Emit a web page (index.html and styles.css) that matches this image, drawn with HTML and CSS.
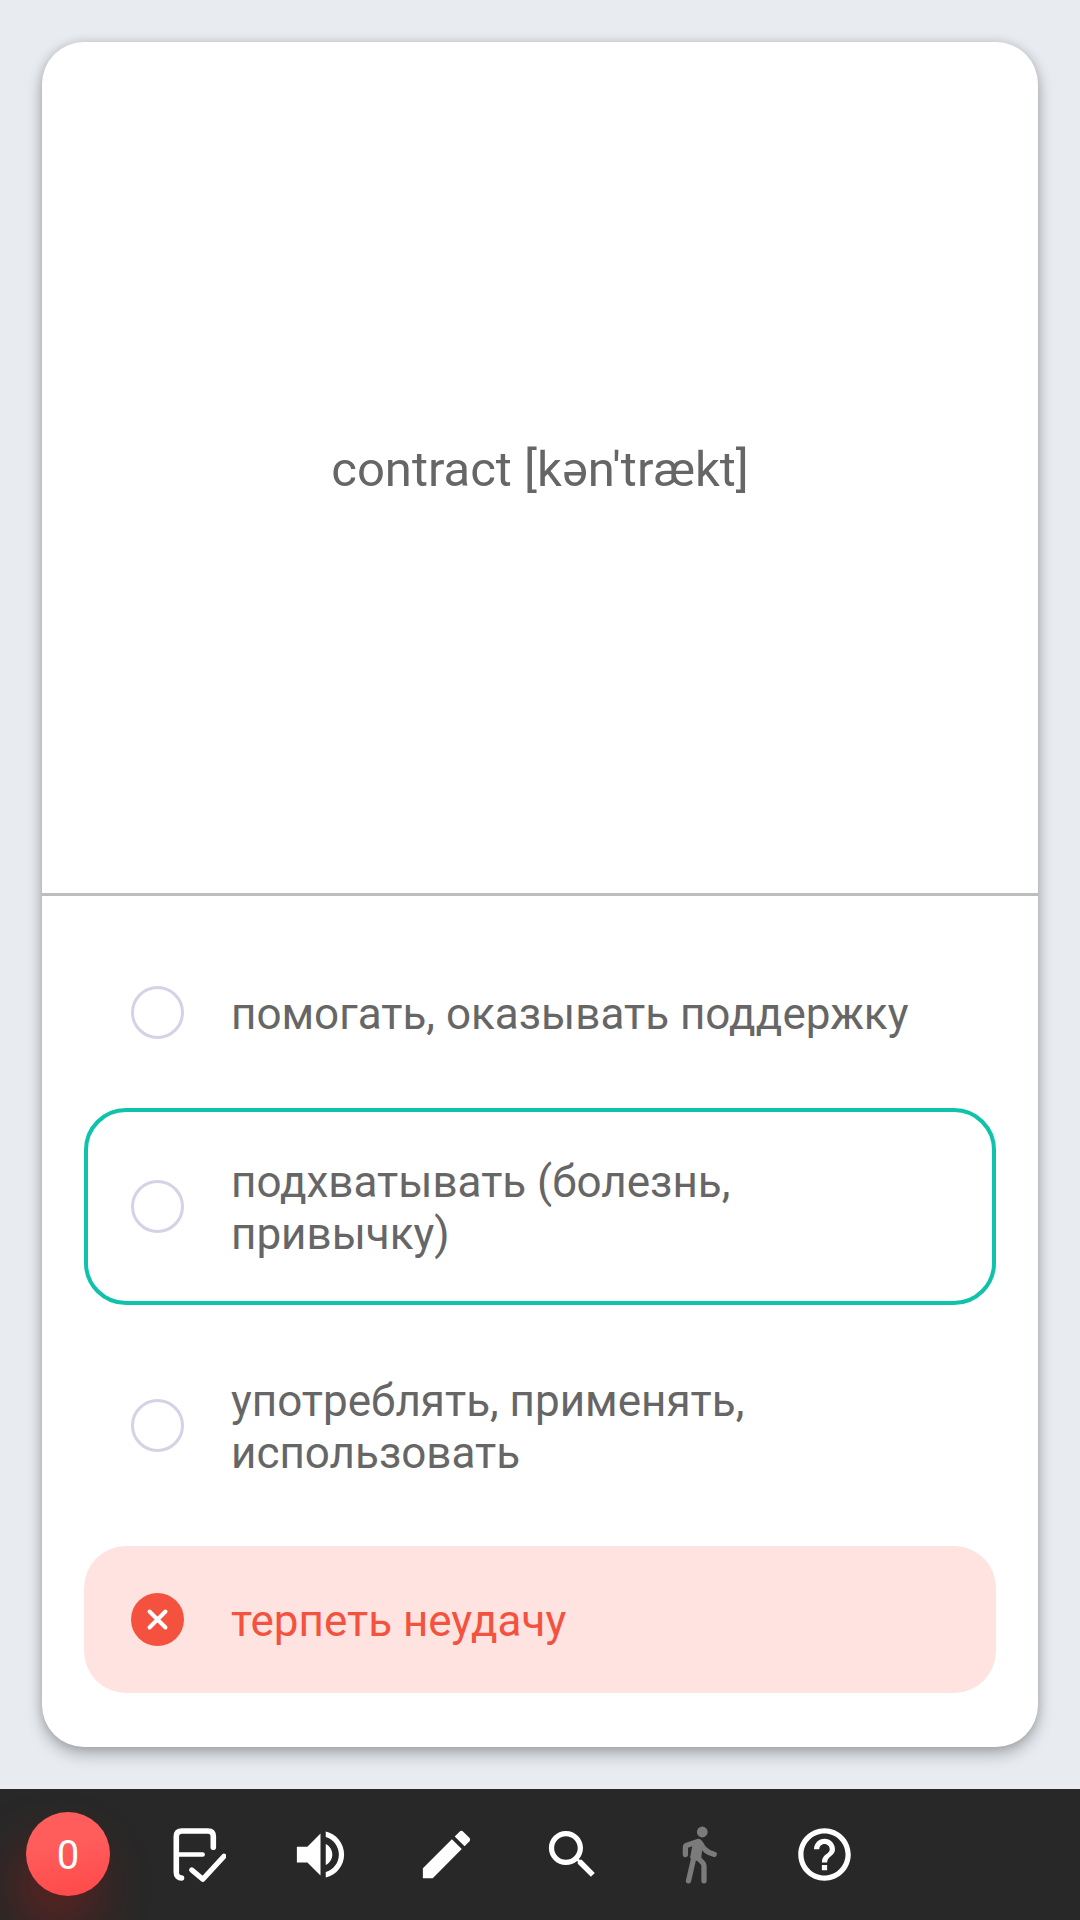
FILE: index.html
```html
<!DOCTYPE html>
<html lang="ru">
<head>
  <meta charset="utf-8">
  <meta name="viewport" content="width=device-width, initial-scale=1">
  <title>contract</title>
  <link rel="stylesheet" href="styles.css">
</head>
<body>
  <main class="stage">
    <article class="card">
      <h1 class="word">contract [kən'trækt]</h1>
      <form class="answers">
        <label class="answer">
          <input class="answer-mark" type="radio" name="answer">
          <span class="answer-text">помогать, оказывать поддержку</span>
        </label>
        <label class="answer answer-correct">
          <input class="answer-mark" type="radio" name="answer">
          <span class="answer-text">подхватывать (болезнь, привычку)</span>
        </label>
        <label class="answer">
          <input class="answer-mark" type="radio" name="answer">
          <span class="answer-text">употреблять, применять, использовать</span>
        </label>
        <label class="answer answer-wrong">
          <span class="mark-box">
            <input class="answer-mark" type="radio" name="answer" checked>
            <svg class="cross" viewBox="0 0 53 53" aria-hidden="true"><path d="M18.500 18.500L34.500 34.500M34.500 18.500L18.500 34.500"/></svg>
          </span>
          <span class="answer-text">терпеть неудачу</span>
        </label>
      </form>
    </article>
  </main>

  <nav class="toolbar">
    <button class="counter" type="button">0</button>
    <button class="tool" type="button" aria-label="Отметить">
      <svg class="icon icon-line" viewBox="0 0 63 63"><path stroke-width="5.600" d="M18.500 55C15.500 55 13.300 53 13.300 49.500V13.500Q13.300 8 19 8H45Q50.300 8 50.300 13.500V24.300"/><path stroke-width="4.600" d="M13.500 31.500H39.600"/><path stroke-width="5.200" d="M28.800 47L39.800 56.300L61 33.200"/></svg>
    </button>
    <button class="tool" type="button" aria-label="Произнести">
      <svg class="icon" viewBox="0 0 24 24"><path d="M3 9v6h4l5 5V4L7 9H3zm13.500 3c0-1.770-1.020-3.290-2.500-4.030v8.050c1.480-.730 2.500-2.250 2.500-4.020zM14 3.230v2.060c2.890.860 5 3.540 5 6.710s-2.110 5.850-5 6.710v2.060c4.010-.910 7-4.490 7-8.770s-2.990-7.860-7-8.770z"/></svg>
    </button>
    <button class="tool" type="button" aria-label="Изменить">
      <svg class="icon" viewBox="0 0 24 24"><path d="M3 17.250V21h3.750L17.810 9.940l-3.750-3.750L3 17.250zM20.710 7.040c.390-.390.390-1.020 0-1.410l-2.340-2.340c-.390-.390-1.020-.390-1.410 0l-1.830 1.830 3.750 3.750 1.830-1.830z"/></svg>
    </button>
    <button class="tool" type="button" aria-label="Поиск">
      <svg class="icon" viewBox="0 0 24 24"><path d="M15.500 14h-.790l-.280-.270C15.410 12.590 16 11.110 16 9.500 16 5.910 13.090 3 9.500 3S3 5.910 3 9.500 5.910 16 9.500 16c1.610 0 3.090-.590 4.230-1.570l.270.280v.790l5 4.990L20.490 19l-4.990-5zm-6 0C7.010 14 5 11.990 5 9.500S7.010 5 9.500 5 14 7.010 14 9.500 11.990 14 9.500 14z"/></svg>
    </button>
    <button class="tool tool-off" type="button" aria-label="Прогулка" disabled>
      <svg class="icon icon-line" viewBox="0 0 63 63"><circle cx="35.300" cy="9" r="5.400" fill="currentColor" stroke="none"/><path stroke-width="5.300" d="M18.400 31.500V24.500Q18.400 23 20 22.300L31 18.400Q32.500 18.400 33.500 20.500Q38 29.500 47.300 31.300M27 34L21.500 57.800M31 35L35.500 39.500Q37 41 37 43V57.800"/><path fill="currentColor" stroke="none" d="M26 19L33 16.500L37 21L35 28L34 37L28 38L23 35Z"/></svg>
    </button>
    <button class="tool" type="button" aria-label="Справка">
      <svg class="icon" viewBox="0 0 24 24"><path d="M11 18h2v-2h-2v2zm1-16C6.480 2 2 6.480 2 12s4.480 10 10 10 10-4.480 10-10S17.520 2 12 2zm0 18c-4.410 0-8-3.590-8-8s3.590-8 8-8 8 3.590 8 8-3.590 8-8 8zm0-14c-2.210 0-4 1.790-4 4h2c0-1.100.900-2 2-2s2 .900 2 2c0 2-3 1.750-3 5h2c0-2.250 3-2.500 3-5 0-2.210-1.790-4-4-4z"/></svg>
    </button>
  </nav>
</body>
</html>
```
FILE: styles.css
```css
* {
  box-sizing: border-box;
}

body {
  display: flex;
  flex-direction: column;
  min-height: 100vh;
  margin: 0;
  background: #e8ebf0;
  color: #666;
  font-family: Roboto, "Noto Sans", sans-serif;
}

.stage {
  display: flex;
  flex: 1;
  padding: 42px;
}

.card {
  display: grid;
  flex: 1;
  grid-template-rows: 1fr auto;
  border-radius: 42px;
  background: #fff;
  box-shadow: 0 7px 16px rgba(0, 0, 0, 0.28), 0 0 10px rgba(0, 0, 0, 0.12);
}

.word {
  display: flex;
  align-items: center;
  justify-content: center;
  margin: 0;
  padding: 46px 42px 42px;
  font-size: 49px;
  font-weight: 400;
  line-height: 60px;
}

.answers {
  display: flex;
  flex-direction: column;
  gap: 22px;
  padding: 43px 42px 54px;
  border-top: 3px solid #bdbdbd;
}

.answer {
  display: flex;
  align-items: center;
  gap: 47px;
  min-height: 147px;
  padding: 45px 47px;
  border-radius: 42px;
  cursor: pointer;
}

.answer-correct {
  padding: 41px 43px;
  border: 4px solid #0fc3ab;
}

.answer-wrong {
  background: #fee3e0;
  color: #f4523f;
}

.answer-mark {
  flex: none;
  width: 53px;
  height: 53px;
  margin: 0;
  border: 3px solid #d5d1e6;
  border-radius: 50%;
  appearance: none;
}

.mark-box {
  display: grid;
  flex: none;
}

.mark-box > * {
  grid-area: 1 / 1;
}

.answer-wrong .answer-mark {
  border: 0;
  background: #f4523f;
}

.cross {
  width: 53px;
  height: 53px;
  fill: none;
  stroke: #fff;
  stroke-linecap: round;
  stroke-width: 4;
}

.answer-text {
  padding-top: 3px;
  font-size: 44px;
  line-height: 52px;
}

.toolbar {
  display: flex;
  align-items: center;
  min-height: 131px;
  padding: 0 26px 1px;
  overflow: hidden;
  background: #282828;
}

.counter,
.tool {
  flex: none;
  padding: 0;
  border: 0;
  background: none;
  color: #fff;
  font: inherit;
}

.counter {
  width: 84px;
  height: 84px;
  margin-right: 21px;
  padding-top: 3px;
  border-radius: 50%;
  background: linear-gradient(170deg, #ff5c5c 40%, #ff4848);
  box-shadow: -10px 32px 60px -8px rgba(255, 20, 10, 0.4);
  font-size: 40px;
}

.tool {
  display: grid;
  place-items: center;
  width: 126px;
  height: 126px;
}

.tool-off {
  color: #7b7b7b;
}

.icon {
  width: 63px;
  height: 63px;
  fill: currentColor;
}

.icon-line {
  fill: none;
  stroke: currentColor;
  stroke-linecap: round;
  stroke-linejoin: round;
}
```
